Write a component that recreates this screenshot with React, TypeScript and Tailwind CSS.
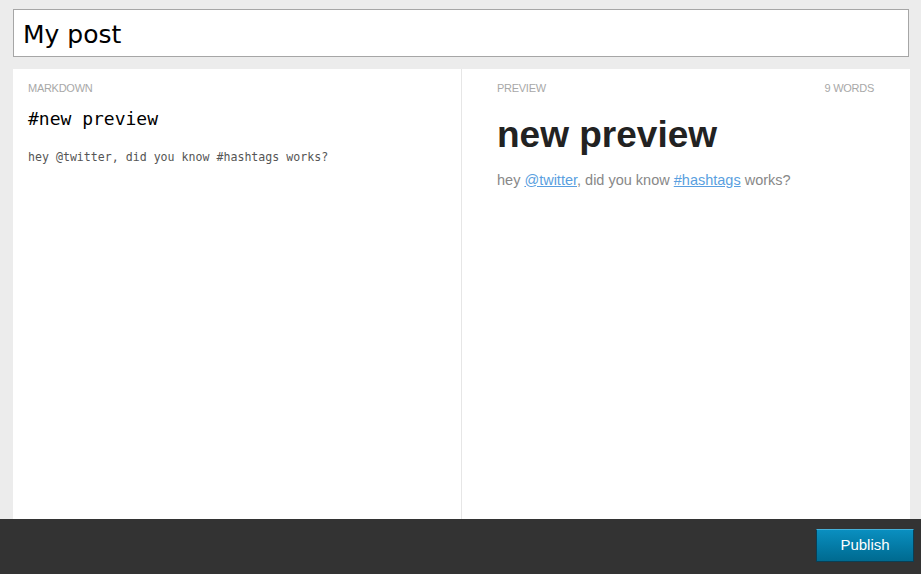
import React from "react";

const App = () => {
  return (
    <div className="h-screen flex flex-col bg-[#ececec]">
      <div className="pt-[9px] px-[13px] pr-[12px]">
        <input
          type="text"
          defaultValue="My post"
          className="w-full h-[48px] border border-[#a6a6a6] bg-white px-[9px] pt-[3px] text-[25px] text-black outline-none font-['DejaVu_Sans',sans-serif]"
        />
      </div>
      <div className="flex-1 flex mt-[12px] mx-[13px] mr-[11px] bg-white min-h-0">
        <div className="w-[449px] border-r border-[#e6e6e6] pl-[15px] pr-4 pt-[11px]">
          <div className="text-[11px] uppercase text-[#a8a8a8] tracking-tight font-['Liberation_Sans',sans-serif]">
            Markdown
          </div>
          <div className="mt-[8px] text-[18px] text-black font-['DejaVu_Sans_Mono',monospace]">
            #new preview
          </div>
          <div className="mt-[17px] text-[11.6px] text-[#555] font-['DejaVu_Sans_Mono',monospace]">
            hey @twitter, did you know #hashtags works?
          </div>
        </div>
        <div className="flex-1 pl-[35px] pr-[36px] pt-[11px] font-['Liberation_Sans',sans-serif]">
          <div className="flex justify-between text-[11px] uppercase text-[#a8a8a8] tracking-tight">
            <span>Preview</span>
            <span>9 words</span>
          </div>
          <h1 className="mt-[16px] text-[37px] font-bold leading-[44px] text-[#222]">
            new preview
          </h1>
          <p className="mt-[13px] text-[14.5px] text-[#888]">
            hey{" "}
            <a href="#" className="text-[#5a9fe0] underline">
              @twitter
            </a>
            , did you know{" "}
            <a href="#" className="text-[#5a9fe0] underline">
              #hashtags
            </a>{" "}
            works?
          </p>
        </div>
      </div>
      <div className="h-[55px] bg-[#333] flex items-start justify-end pt-[10px] pr-[7px]">
        <button className="w-[98px] h-[33px] border border-[#0a3f55] border-t-[#45b0d8] bg-gradient-to-b from-[#0a8fc0] to-[#006a90] text-white text-[15px] font-['Liberation_Sans',sans-serif]">
          Publish
        </button>
      </div>
    </div>
  );
};

export default App;
